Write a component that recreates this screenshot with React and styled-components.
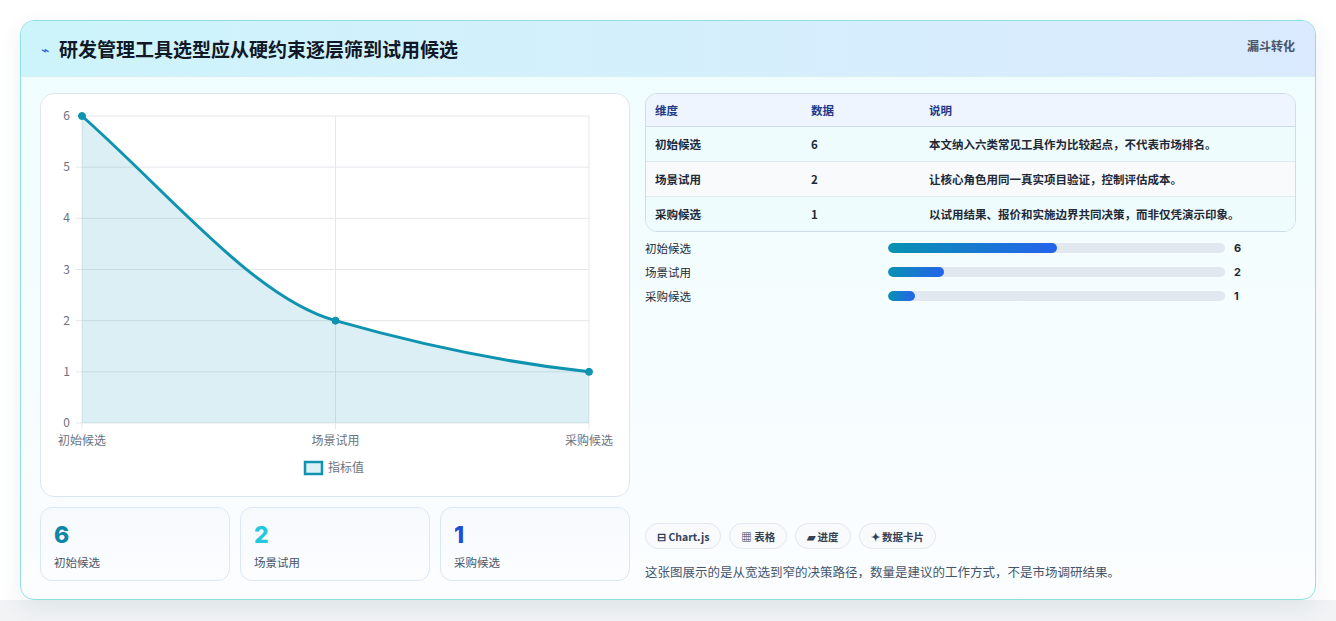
import React from "react";
import styled, { createGlobalStyle } from "styled-components";

const Global = createGlobalStyle`
  body { margin: 0; background: #fff; font-family: "Noto Sans CJK SC", "Noto Sans", sans-serif; }
`;

const Page = styled.div`
  padding: 20px 20px 21px 20px;
  background: linear-gradient(#fff 0, #fff 600px, #f1f3f5 600px);
  height: 621px;
  box-sizing: border-box;
`;

const Card = styled.section`
  width: 1296px;
  height: 580px;
  box-sizing: border-box;
  border: 1px solid #8fdfe6;
  border-radius: 14px;
  background: linear-gradient(180deg, #effdfe 0%, #fbfdff 100%);
  box-shadow: 0 8px 24px rgba(15, 60, 90, 0.08);
  overflow: hidden;
  display: flex;
  flex-direction: column;
`;

const Header = styled.header`
  height: 55px;
  flex: none;
  display: flex;
  align-items: center;
  padding: 0 20px;
  background: linear-gradient(90deg, #cdf4fb 0%, #dbeafe 100%);
  border-bottom: 1px solid #d8eef3;
  position: relative;
`;

const Bolt = styled.span`
  color: #2563eb;
  font-size: 14px;
  margin-right: 10px;
`;

const Title = styled.h1`
  margin: 0;
  font-size: 19px;
  font-weight: 700;
  color: #111827;
`;

const Tag = styled.span`
  position: absolute;
  right: 20px;
  top: 16px;
  font-size: 12px;
  font-weight: 700;
  color: #475569;
`;

const Body = styled.div`
  flex: 1;
  display: grid;
  grid-template-columns: 590px 1fr;
  gap: 15px;
  padding: 16px 19px 18px 19px;
`;

const Col = styled.div`
  display: flex;
  flex-direction: column;
`;

const ChartPanel = styled.div`
  height: 404px;
  box-sizing: border-box;
  background: #fff;
  border: 1px solid #dbe7f0;
  border-radius: 14px;
`;

const Stats = styled.div`
  margin-top: 10px;
  display: grid;
  grid-template-columns: repeat(3, 1fr);
  gap: 10px;
`;

const Stat = styled.div`
  height: 74px;
  box-sizing: border-box;
  border: 1px solid #dbe7f5;
  border-radius: 12px;
  background: linear-gradient(180deg, #f7fafd, #fbfdff);
  padding: 12px 13px;
`;

const StatNum = styled.div`
  font-family: "Inter", sans-serif;
  font-size: 23px;
  font-weight: 800;
  line-height: 30px;
  color: ${p => p.c};
`;

const StatLabel = styled.div`
  font-size: 11.5px;
  color: #475569;
  margin-top: 4px;
`;

const Table = styled.table`
  width: 100%;
  border-collapse: separate;
  border-spacing: 0;
  border: 1px solid #cfdbe8;
  border-radius: 12px;
  overflow: hidden;
  font-size: 11.5px;
  th, td { text-align: left; padding: 0 9px; }
  th { height: 32px; background: #eef5fe; color: #1e3a8a; font-weight: 700; border-bottom: 1px solid #cfdbe8; }
  td { height: 34px; color: #1f2937; font-weight: 700; }
  tr:not(:last-child) td { border-bottom: 1px solid #e2e8f0; }
  tbody tr:nth-child(odd) td { background: #effcfd; }
  tbody tr:nth-child(even) td { background: #f8fafc; }
`;

const Bars = styled.div`
  margin-top: 8px;
  display: flex;
  flex-direction: column;
  gap: 8px;
`;

const BarRow = styled.div`
  display: grid;
  grid-template-columns: 243px 337px 1fr;
  align-items: center;
  gap: 0;
  font-size: 11.5px;
  color: #1f2937;
  height: 16px;
  b { padding-left: 9px; font-family: "Inter", sans-serif; font-size: 11px; }
`;

const Track = styled.div`
  height: 10px;
  border-radius: 5px;
  background: #e2e8f0;
  overflow: hidden;
`;

const Fill = styled.div`
  height: 100%;
  border-radius: 5px;
  background: linear-gradient(90deg, #0891b2, #2563eb);
`;

const Spacer = styled.div` flex: 1; `;

const Chips = styled.div`
  display: flex;
  gap: 8px;
`;

const Chip = styled.span`
  height: 26px;
  box-sizing: border-box;
  padding: 0 11px;
  display: inline-flex;
  align-items: center;
  border: 1px solid #e2e8f0;
  border-radius: 13px;
  background: #f8fafc;
  font-size: 10.5px;
  font-weight: 700;
  color: #334155;
`;

const Note = styled.p`
  margin: 13px 0 0;
  font-size: 12.5px;
  color: #475569;
`;

const rows = [
  ["初始候选", 6, "本文纳入六类常见工具作为比较起点，不代表市场排名。"],
  ["场景试用", 2, "让核心角色用同一真实项目验证，控制评估成本。"],
  ["采购候选", 1, "以试用结果、报价和实施边界共同决策，而非仅凭演示印象。"],
];

function Chart() {
  const x0 = 41, x1 = 548, y0 = 22, y1 = 329;
  const ys = [0, 1, 2, 3, 4, 5, 6];
  const yp = v => y1 - (v / 6) * (y1 - y0);
  const xm = (x0 + x1) / 2;
  const line = `M${x0} ${yp(6)} C ${x0 + 90} ${yp(6) + 80}, ${xm - 80} ${yp(2) - 22}, ${xm} ${yp(2)} C ${xm + 70} ${yp(2) + 20}, ${x1 - 90} ${yp(1) - 10}, ${x1} ${yp(1)}`;
  return (
    <svg width="588" height="402" style={{ display: "block" }} fontFamily="Noto Sans CJK SC, sans-serif">
      {ys.map(v => (
        <g key={v}>
          <line x1={x0 - 6} x2={x1} y1={yp(v)} y2={yp(v)} stroke="#e5e7eb" />
          <text x={x0 - 12} y={yp(v) + 4} fontSize="12" fill="#6b7280" textAnchor="end">{v}</text>
        </g>
      ))}
      {[x0, xm, x1].map(x => <line key={x} x1={x} x2={x} y1={y0} y2={y1 + 6} stroke="#e5e7eb" />)}
      <path d={`${line} L ${x1} ${y1} L ${x0} ${y1} Z`} fill="rgba(8,145,178,0.14)" />
      <path d={line} fill="none" stroke="#0e93b0" strokeWidth="3" />
      {[[x0, 6], [xm, 2], [x1, 1]].map(([x, v]) => (
        <circle key={x} cx={x} cy={yp(v)} r="3.5" fill="#0e93b0" stroke="#0e93b0" />
      ))}
      {[["初始候选", x0], ["场景试用", xm], ["采购候选", x1]].map(([t, x]) => (
        <text key={t} x={x} y={351} fontSize="12" fill="#6b7280" textAnchor="middle">{t}</text>
      ))}
      <rect x="264" y="368" width="17" height="12" fill="#dcf0f5" stroke="#0e93b0" strokeWidth="2.5" />
      <text x="287" y="378" fontSize="12" fill="#6b7280">指标值</text>
    </svg>
  );
}

export default function App() {
  return (
    <Page>
      <Global />
      <Card>
        <Header>
          <Bolt>⌁</Bolt>
          <Title>研发管理工具选型应从硬约束逐层筛到试用候选</Title>
          <Tag>漏斗转化</Tag>
        </Header>
        <Body>
          <Col>
            <ChartPanel><Chart /></ChartPanel>
            <Stats>
              <Stat><StatNum c="#0e87a6">6</StatNum><StatLabel>初始候选</StatLabel></Stat>
              <Stat><StatNum c="#22c7e0">2</StatNum><StatLabel>场景试用</StatLabel></Stat>
              <Stat><StatNum c="#1d4ed8">1</StatNum><StatLabel>采购候选</StatLabel></Stat>
            </Stats>
          </Col>
          <Col>
            <Table>
              <colgroup><col width="156" /><col width="118" /><col /></colgroup>
              <thead><tr><th>维度</th><th>数据</th><th>说明</th></tr></thead>
              <tbody>
                {rows.map(r => <tr key={r[0]}><td>{r[0]}</td><td>{r[1]}</td><td>{r[2]}</td></tr>)}
              </tbody>
            </Table>
            <Bars>
              {rows.map(r => (
                <BarRow key={r[0]}>
                  <span>{r[0]}</span>
                  <Track><Fill style={{ width: `${[50, 16.5, 8][r[1] === 6 ? 0 : r[1] === 2 ? 1 : 2]}%` }} /></Track>
                  <b>{r[1]}</b>
                </BarRow>
              ))}
            </Bars>
            <Spacer />
            <Chips>
              <Chip>⊟ Chart.js</Chip>
              <Chip>▦ 表格</Chip>
              <Chip>▰ 进度</Chip>
              <Chip>✦ 数据卡片</Chip>
            </Chips>
            <Note>这张图展示的是从宽选到窄的决策路径，数量是建议的工作方式，不是市场调研结果。</Note>
          </Col>
        </Body>
      </Card>
    </Page>
  );
}
